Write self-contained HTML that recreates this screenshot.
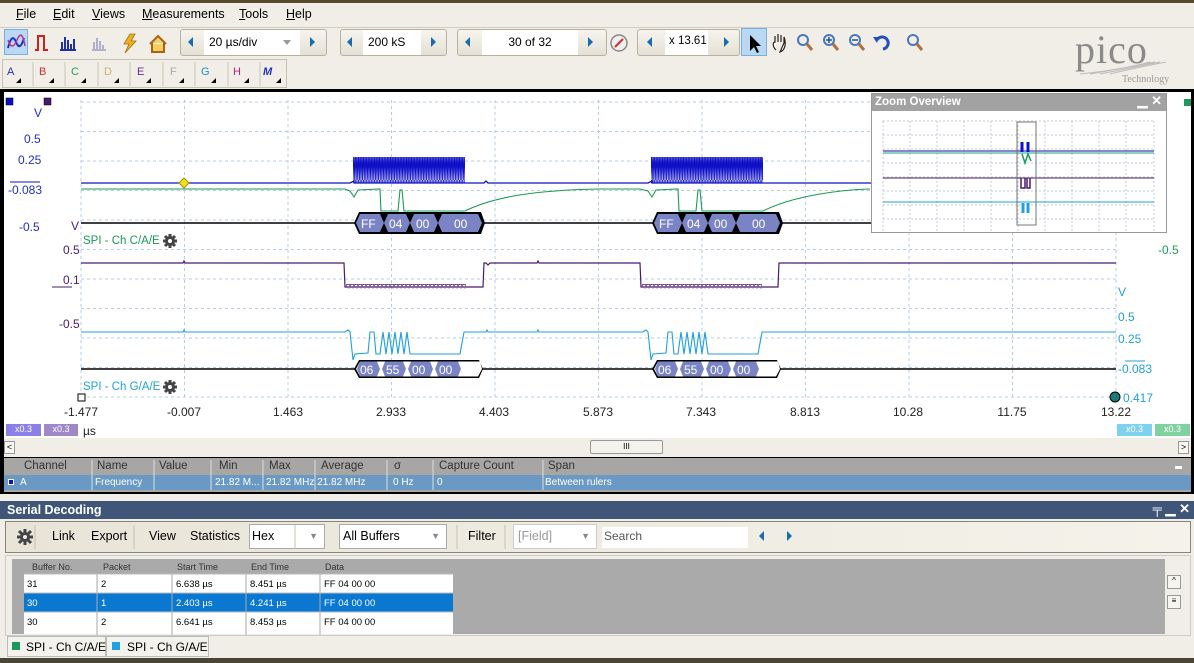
<!DOCTYPE html>
<html><head><meta charset="utf-8"><style>
*{margin:0;padding:0;box-sizing:border-box;white-space:nowrap}
body{width:1194px;height:663px;overflow:hidden;background:#f0eee6;font-family:"Liberation Sans",sans-serif;font-size:12px;color:#000;position:relative}
.abs{position:absolute}
.menu span{position:absolute;top:7px;font-size:12.5px}
.tb{position:absolute;border:1px solid #b8b0a0;border-radius:3px;background:linear-gradient(#f6f4ee,#e4e0d4)}
.fld{position:absolute;background:#fff;font-size:12px;padding-top:5px}
.arr{position:absolute;width:0;height:0;border-top:5px solid transparent;border-bottom:5px solid transparent}
.al{border-right:5px solid #1a6cb0}
.ar{border-left:5px solid #1a6cb0}
.ch{position:absolute;top:66px;font-size:11px}
.lbl{position:absolute;font-size:12px}
.xl{position:absolute;top:405px;font-size:12px;color:#222;transform:translateX(-50%)}
.mh{position:absolute;top:460px;font-size:11.5px;color:#333}
.mr{position:absolute;top:477px;font-size:10px;color:#fff}
.sdt{position:absolute;top:529px;font-size:12.5px}
.th{position:absolute;top:562px;font-size:9px;color:#333}
.td{position:absolute;font-size:9.5px}
</style></head><body>
<div class="abs" style="left:0;top:0;width:1194px;height:3px;background:#5a4a2c"></div>
<div class="menu"><span style="left:16px"><u>F</u>ile</span><span style="left:53px"><u>E</u>dit</span><span style="left:92px"><u>V</u>iews</span><span style="left:142px"><u>M</u>easurements</span><span style="left:239px"><u>T</u>ools</span><span style="left:286px"><u>H</u>elp</span></div>
<div class="abs" style="left:0;top:27px;width:1194px;height:1px;background:#d0ccc0"></div>
<div class="abs" style="left:4px;top:29px;width:24px;height:26px;background:#b8d8f4;border:1px solid #7ab0e0"></div>
<svg class="abs" style="left:0;top:28px" width="180" height="30">
<path d="M8 20 Q12 4 16 14 T24 10" stroke="#2030c0" stroke-width="2" fill="none"/><path d="M8 12 Q12 24 17 12 T25 18" stroke="#c03090" stroke-width="1.5" fill="none"/>
<path d="M35 22 H38 V8 H44 V22 H48" stroke="#d02020" stroke-width="2" fill="none"/>
<path d="M60 22 H76 M62 22V14 M65 22V9 M68 22V12 M71 22V16 M74 22V11" stroke="#2030a0" stroke-width="2"/>
<path d="M92 22 H106 M94 22V14 M97 22V10 M100 22V13 M103 22V17" stroke="#b0b0c8" stroke-width="2"/>
<path d="M130 6 L124 16 H129 L125 25 L136 13 H131 L135 6Z" fill="#f0b020" stroke="#a07010" stroke-width=".8"/>
<path d="M150 16 L158 8 L166 16 M152 15 V24 H164 V15" stroke="#b06010" stroke-width="2" fill="#f0d060"/>
</svg>
<div class="tb" style="left:180px;top:29px;width:147px;height:27px"></div>
<div class="arr al" style="left:188px;top:37px"></div><div class="fld" style="left:204px;top:30px;width:96px;height:25px;padding-left:5px">20 µs/div</div>
<div class="arr" style="left:283px;top:40px;border:4px solid transparent;border-top:5px solid #999"></div>
<div class="arr ar" style="left:310px;top:37px"></div>
<div class="tb" style="left:340px;top:29px;width:107px;height:27px"></div>
<div class="arr al" style="left:347px;top:37px"></div><div class="fld" style="left:363px;top:30px;width:58px;height:25px;padding-left:5px">200 kS</div><div class="arr ar" style="left:431px;top:37px"></div>
<div class="tb" style="left:457px;top:29px;width:150px;height:27px"></div>
<div class="arr al" style="left:465px;top:37px"></div><div class="fld" style="left:482px;top:30px;width:96px;height:25px;text-align:center">30 of 32</div><div class="arr ar" style="left:588px;top:37px"></div>
<svg class="abs" style="left:608px;top:32px" width="22" height="22"><circle cx="11" cy="11" r="8" fill="#eee" stroke="#888" stroke-width="1.5"/><path d="M7 15 L15 7" stroke="#d03030" stroke-width="2"/></svg>
<div class="tb" style="left:637px;top:29px;width:103px;height:27px"></div>
<div class="arr al" style="left:647px;top:37px"></div><div class="fld" style="left:665px;top:30px;width:43px;height:25px;padding-left:4px;font-size:11.5px">x 13.61</div><div class="arr ar" style="left:724px;top:37px"></div>
<div class="abs" style="left:741px;top:28px;width:26px;height:28px;background:#b8d8f4;border:1px solid #7ab0e0"></div>
<svg class="abs" style="left:740px;top:28px" width="190" height="30">
<path d="M10 7 V23 L14 19 L17 25 L19 24 L16 18 H21Z" fill="#000"/>
<path d="M36 22 C32 18 33 14 35 14 V8 M38 14 V6 M41 14 V7 M44 15 V9 C46 14 46 22 40 24Z" stroke="#222" fill="#fff" stroke-width="1.2"/>
<g fill="none" stroke-width="2"><circle cx="63" cy="12" r="5" stroke="#4a78b8"/><path d="M67 16 L72 22" stroke="#b07040" stroke-width="3"/>
<circle cx="89" cy="12" r="5" stroke="#4a78b8"/><path d="M93 16 L98 22" stroke="#b07040" stroke-width="3"/><path d="M86 12h6M89 9v6" stroke="#2050a0" stroke-width="1.5"/>
<circle cx="115" cy="12" r="5" stroke="#4a78b8"/><path d="M119 16 L124 22" stroke="#b07040" stroke-width="3"/><path d="M112 12h6" stroke="#2050a0" stroke-width="1.5"/>
<path d="M137 12 A6 6 0 1 1 143 21" stroke="#2050c0" stroke-width="3"/><path d="M133 9 L139 9 L137 15Z" fill="#2050c0" stroke="none"/>
<circle cx="173" cy="12" r="5" stroke="#4a78b8"/><path d="M177 16 L182 22" stroke="#b07040" stroke-width="3"/></g>
</svg>
<div class="abs" style="left:1075px;top:26px;font-family:'Liberation Serif',serif;font-size:40px;color:#8a8a8a;letter-spacing:1px">pico</div>
<div class="abs" style="left:1122px;top:74px;font-family:'Liberation Serif',serif;font-size:10px;color:#999">Technology</div>
<svg class="abs" style="left:1080px;top:60px" width="100" height="16"><path d="M0 14 Q40 10 70 2 M10 14 Q45 8 75 2 M20 14 Q50 8 80 2 M30 14 Q55 8 86 2" stroke="#bbb" fill="none"/></svg>
<div class="abs" style="left:2px;top:59px;width:285px;height:29px;border:1px solid #c8c0b0;background:#f0eee6"></div>
<div class="ch" style="left:7px;color:#2030c0">A</div><div class="ch" style="left:39px;color:#d03030">B</div><div class="ch" style="left:71px;color:#20a060">C</div><div class="ch" style="left:104px;color:#d0b070">D</div><div class="ch" style="left:137px;color:#6a2a9a">E</div><div class="ch" style="left:170px;color:#aaa">F</div><div class="ch" style="left:201px;color:#1a90d0">G</div><div class="ch" style="left:233px;color:#c02080">H</div><div class="ch" style="left:263px;color:#2030c0;font-style:italic;font-weight:bold">M</div>
<svg class="abs" style="left:0;top:59px" width="290" height="30"><g fill="#000"><path d="M16 24h5v-5z"/><path d="M49 24h5v-5z"/><path d="M81 24h5v-5z"/><path d="M114 24h5v-5z"/><path d="M146 24h5v-5z"/><path d="M179 24h5v-5z"/><path d="M211 24h5v-5z"/><path d="M244 24h5v-5z"/><path d="M276 24h5v-5z"/></g><g stroke="#ccc4b4"><path d="M33 3v24M65 3v24M98 3v24M130 3v24M163 3v24M195 3v24M228 3v24M260 3v24"/></g></svg>
<div class="abs" style="left:0;top:89px;width:1194px;height:405px;background:#000"></div>
<div class="abs" style="left:4px;top:92px;width:1187px;height:346px;background:#fff"></div>
<div class="abs" style="left:4px;top:438px;width:1187px;height:19px;background:#f0eee6"></div>
<div class="abs" style="left:4px;top:441px;width:11px;height:13px;border:1px solid #999;background:#f8f8f4;font-size:9px;text-align:center;line-height:11px">&lt;</div>
<div class="abs" style="left:1178px;top:441px;width:11px;height:13px;border:1px solid #999;background:#f8f8f4;font-size:9px;text-align:center;line-height:11px">&gt;</div>
<div class="abs" style="left:590px;top:440px;width:73px;height:14px;border:1px solid #999;border-radius:2px;background:#f4f2ec;font-size:8px;text-align:center;line-height:12px">III</div>
<svg class="abs" style="left:0;top:0" width="1194" height="440">
<defs>
<pattern id="zz" x="353" y="0" width="3.2" height="30" patternUnits="userSpaceOnUse"><path d="M0 30 L0.8 0 L1.6 30 L2.4 0 L3.2 30" stroke="#1010c8" stroke-width="0.9" fill="none"/></pattern>
<pattern id="pn" x="0" y="0" width="4" height="6" patternUnits="userSpaceOnUse"><path d="M0 3 L1 1 L2 4 L3 2 L4 3" stroke="#4a1a6a" fill="none" stroke-width="0.8"/></pattern>
</defs>
<g stroke="#b8cce0" stroke-dasharray="3,3" stroke-width="1">
<path d="M81 102H1116M81 131.5H1116M81 161H1116M81 190.5H1116M81 220H1116M81 249.5H1116M81 279H1116M81 308.5H1116M81 338H1116M81 367.5H1116M81 397H1116"/>
<path d="M81 100V397M184.5 100V397M288 100V397M391.5 100V397M495 100V397M598.5 100V397M702 100V397M805.5 100V397M909 100V397M1012.5 100V397M1116 100V397"/>
</g>
<path d="M81 183H350L354 181V183H465L470 183H484L486 181L488 183H648L652 181V183H763H1116" stroke="#1010c0" fill="none" stroke-width="1.3"/>
<rect x="353" y="157" width="112" height="26" fill="url(#zz)"/><rect x="651" y="157" width="112" height="26" fill="url(#zz)"/>
<path d="M81 189H345L350 191L354 197L358 190L380 189L381 211L398 211L400 190L402 190L404 211L465 211C495 196 540 190 600 189H640L648 191L652 197L656 190L678 189L679 211L696 211L698 190L700 190L702 211L763 211C793 196 838 190 870 189" stroke="#1a9a5a" fill="none" stroke-width="1.1"/>
<path d="M81 223H1116" stroke="#000" stroke-width="1.5"/>
<polygon points="359,212 481,212 485,223 481,234 359,234 354,223" fill="#000"/>
<polygon points="360,214 380,214 384,223 380,232 360,232 356,223" fill="#7a84c4"/>
<polygon points="388,214 406,214 410,223 406,232 388,232 384,223" fill="#7a84c4"/>
<polygon points="414,214 434,214 438,223 434,232 414,232 410,223" fill="#7a84c4"/>
<polygon points="442,214 478,214 482,223 478,232 442,232 438,223" fill="#7a84c4"/>
<polygon points="657,212 779,212 783,223 779,234 657,234 652,223" fill="#000"/>
<polygon points="658,214 678,214 682,223 678,232 658,232 654,223" fill="#7a84c4"/>
<polygon points="686,214 704,214 708,223 704,232 686,232 682,223" fill="#7a84c4"/>
<polygon points="712,214 732,214 736,223 732,232 712,232 708,223" fill="#7a84c4"/>
<polygon points="740,214 776,214 780,223 776,232 740,232 736,223" fill="#7a84c4"/>
<g fill="#fff" font-size="12" font-family="Liberation Sans"><text x="361" y="228">FF</text><text x="389" y="228">04</text><text x="416" y="228">00</text><text x="454" y="228">00</text><text x="659" y="228">FF</text><text x="687" y="228">04</text><text x="714" y="228">00</text><text x="752" y="228">00</text></g>
<path d="M81 263H183L184 261L185 263H344L345 287H483L484 263H486L488 265L490 263H537L538 261L539 263H640L641 287H778L779 263H1116" stroke="#4a1a6a" fill="none" stroke-width="1.2"/>
<rect x="346" y="284" width="120" height="5" fill="url(#pn)"/><rect x="642" y="284" width="120" height="5" fill="url(#pn)"/>
<path d="M52 287H72" stroke="#4a1a6a"/>
<path d="M81 332H183L184 330L185 332H345L348 330L350 332L353 360L355 354L368 353L370 332L374 332L376 354L380 354L383 332L386 354L389 332L392 354L395 332L398 354L401 332L404 354L407 332L410 354L460 354L464 332H486L487 330L488 332H537L538 330L539 332H643L646 330L648 332L651 360L653 354L666 353L668 332L672 332L674 354L678 354L681 332L684 354L687 332L690 354L693 332L696 354L699 332L702 354L705 332L708 354L758 354L762 332H1116" stroke="#20a0d8" fill="none" stroke-width="1.1"/>
<path d="M81 369H1116" stroke="#000" stroke-width="1.5"/>
<polygon points="359,360 479,360 483,369 479,378 359,378 354,369" fill="#000"/>
<polygon points="360,361.5 480,361.5 482,369 478,376.5 360,376.5 356,369" fill="#fff"/>
<polygon points="360,361.5 377,361.5 380,369 377,376.5 360,376.5 357,369" fill="#7a84c4"/>
<polygon points="385,361.5 403,361.5 406,369 403,376.5 385,376.5 382,369" fill="#7a84c4"/>
<polygon points="411,361.5 430,361.5 433,369 430,376.5 411,376.5 408,369" fill="#7a84c4"/>
<polygon points="438,361.5 458,361.5 461,369 458,376.5 438,376.5 435,369" fill="#7a84c4"/>
<polygon points="657,360 777,360 781,369 777,378 657,378 652,369" fill="#000"/>
<polygon points="658,361.5 778,361.5 780,369 776,376.5 658,376.5 654,369" fill="#fff"/>
<polygon points="658,361.5 675,361.5 678,369 675,376.5 658,376.5 655,369" fill="#7a84c4"/>
<polygon points="683,361.5 701,361.5 704,369 701,376.5 683,376.5 680,369" fill="#7a84c4"/>
<polygon points="709,361.5 728,361.5 731,369 728,376.5 709,376.5 706,369" fill="#7a84c4"/>
<polygon points="736,361.5 756,361.5 759,369 756,376.5 736,376.5 733,369" fill="#7a84c4"/>
<g fill="#fff" font-size="12" font-family="Liberation Sans"><text x="360" y="374">06</text><text x="386" y="374">55</text><text x="412" y="374">00</text><text x="439" y="374">00</text><text x="658" y="374">06</text><text x="684" y="374">55</text><text x="710" y="374">00</text><text x="737" y="374">00</text></g>
<polygon points="184,178 189,183 184,188 179,183" fill="#f0e020" stroke="#a09000"/>
<rect x="6" y="98" width="7" height="7" fill="#1010c0" stroke="#000" stroke-width=".5"/>
<rect x="44" y="98" width="7" height="7" fill="#4a1a6a" stroke="#000" stroke-width=".5"/>
<rect x="1184" y="99" width="7" height="7" fill="#1a9a5a"/>
<rect x="78" y="394" width="7" height="7" fill="#fff" stroke="#000"/>
<circle cx="1115" cy="397" r="5" fill="#1a7a7a" stroke="#000"/>
<path d="M10 182H40" stroke="#1010c0"/><path d="M1125 361H1145" stroke="#20a0d8"/>
<g fill="#444"><circle cx="170" cy="241" r="5"/><circle cx="170" cy="387" r="5"/></g>
<g stroke="#444" stroke-width="3"><path d="M170 234v14M163 241h14M165 236l10 10M175 236l-10 10"/><path d="M170 380v14M163 387h14M165 382l10 10M175 382l-10 10"/></g>
<circle cx="170" cy="241" r="2" fill="#fff"/><circle cx="170" cy="387" r="2" fill="#fff"/>
</svg>
<div class="lbl" style="left:34px;top:106px;color:#2030c0">V</div>
<div class="lbl" style="left:24px;top:132px;color:#2030c0">0.5</div>
<div class="lbl" style="left:18px;top:153px;color:#2030c0">0.25</div>
<div class="lbl" style="left:8px;top:183px;color:#2030c0">-0.083</div>
<div class="lbl" style="left:19px;top:220px;color:#2030c0">-0.5</div>
<div class="lbl" style="left:71px;top:219px;color:#4a1a6a">V</div>
<div class="lbl" style="left:63px;top:243px;color:#4a1a6a">0.5</div>
<div class="lbl" style="left:63px;top:273px;color:#4a1a6a">0.1</div>
<div class="lbl" style="left:59px;top:317px;color:#4a1a6a">-0.5</div>
<div class="lbl" style="left:83px;top:235px;color:#1a9a5a;font-size:11.5px">SPI - Ch C/A/E</div>
<div class="lbl" style="left:83px;top:381px;color:#20a0d8;font-size:11.5px">SPI - Ch G/A/E</div>
<div class="lbl" style="left:1140px;top:169px;color:#1a9a5a">5</div>
<div class="lbl" style="left:1140px;top:213px;color:#1a9a5a">.1</div>
<div class="lbl" style="left:1158px;top:243px;color:#1a9a5a">-0.5</div>
<div class="lbl" style="left:1118px;top:285px;color:#20a0d8">V</div>
<div class="lbl" style="left:1118px;top:310px;color:#20a0d8">0.5</div>
<div class="lbl" style="left:1118px;top:332px;color:#20a0d8">0.25</div>
<div class="lbl" style="left:1118px;top:362px;color:#20a0d8">-0.083</div>
<div class="lbl" style="left:1123px;top:391px;color:#20a0d8">0.417</div>
<div class="xl" style="left:81px">-1.477</div><div class="xl" style="left:184px">-0.007</div><div class="xl" style="left:288px">1.463</div><div class="xl" style="left:391px">2.933</div><div class="xl" style="left:494px">4.403</div><div class="xl" style="left:598px">5.873</div><div class="xl" style="left:701px">7.343</div><div class="xl" style="left:805px">8.813</div><div class="xl" style="left:908px">10.28</div><div class="xl" style="left:1012px">11.75</div><div class="xl" style="left:1116px">13.22</div>
<div class="abs" style="left:6px;top:424px;width:35px;height:12px;background:#8a80e8;color:#fff;font-size:9px;text-align:center">x0.3</div>
<div class="abs" style="left:44px;top:424px;width:34px;height:12px;background:#a088c8;color:#fff;font-size:9px;text-align:center">x0.3</div>
<div class="lbl" style="left:83px;top:424px;color:#222">µs</div>
<div class="abs" style="left:1117px;top:424px;width:35px;height:12px;background:#80d0f0;color:#fff;font-size:9px;text-align:center">x0.3</div>
<div class="abs" style="left:1155px;top:424px;width:35px;height:12px;background:#80d0a0;color:#fff;font-size:9px;text-align:center">x0.3</div>
<div class="abs" style="left:871px;top:93px;width:296px;height:140px;background:#fff;border:1px solid #999"></div>
<div class="abs" style="left:872px;top:94px;width:294px;height:17px;background:#a2a2a2;color:#fff;font-weight:bold;font-size:11.5px;padding:2px 0 0 3px">Zoom Overview<span style="position:absolute;right:4px;top:-1px;font-size:13px">▁ ✕</span></div>
<svg class="abs" style="left:871px;top:111px" width="296" height="122">
<g stroke="#c0ccd8" stroke-dasharray="2,2"><path d="M12 10H283M12 24H283M12 38H283M12 52H283M12 66H283M12 80H283M12 94H283M12 108H283M12 124H283"/><path d="M12 10V124M39 10V124M66 10V124M93 10V124M120 10V124M147 10V124M174 10V124M201 10V124M228 10V124M255 10V124M283 10V124"/></g>
<path d="M12 40H283" stroke="#1010a0"/><path d="M12 42H283" stroke="#20a080"/><path d="M12 67H283" stroke="#4a1a6a"/><path d="M12 91H283" stroke="#20a0d8"/>
<rect x="146" y="11" width="19" height="103" fill="none" stroke="#777"/>
<path d="M151 31V41M157 31V41" stroke="#1010d0" stroke-width="3"/><path d="M151 43L154 52L157 43L160 50" stroke="#1a9a5a" fill="none" stroke-width="1.5"/>
<path d="M150 67V77H154V67M156 67V77H159V67" stroke="#4a1a6a" fill="none" stroke-width="1.5"/>
<path d="M152 92V102M157 92V102" stroke="#20a0e0" stroke-width="3"/>
</svg>
<div class="abs" style="left:4px;top:458px;width:1187px;height:17px;background:#a8a6a4"></div>
<div class="abs" style="left:4px;top:475px;width:1187px;height:15px;background:#6a9ac4"></div>
<div class="abs" style="left:4px;top:490px;width:1187px;height:2px;background:#a8a6a4"></div>
<div class="mh" style="left:24px">Channel</div><div class="mh" style="left:97px">Name</div><div class="mh" style="left:159px">Value</div><div class="mh" style="left:219px">Min</div><div class="mh" style="left:269px">Max</div><div class="mh" style="left:321px">Average</div><div class="mh" style="left:394px">σ</div><div class="mh" style="left:439px">Capture Count</div><div class="mh" style="left:548px">Span</div>
<div class="abs" style="left:1175px;top:466px;width:7px;height:3px;background:#fff"></div>
<svg class="abs" style="left:0;top:458px" width="560" height="34"><path d="M92 2V32M154 2V32M211 2V32M263 2V32M315 2V32M387 2V32M433 2V32M543 2V32" stroke="#ddd"/></svg>
<div class="abs" style="left:8px;top:479px;width:6px;height:6px;background:#1010c0;border:1px solid #fff"></div>
<div class="mr" style="left:20px">A</div><div class="mr" style="left:95px">Frequency</div><div class="mr" style="left:215px">21.82 M...</div><div class="mr" style="left:266px">21.82 MHz 21.82 MHz</div><div class="mr" style="left:393px">0 Hz</div><div class="mr" style="left:437px">0</div><div class="mr" style="left:545px">Between rulers</div>
<div class="abs" style="left:0;top:494px;width:1194px;height:8px;background:#f0eee6"></div>
<div class="abs" style="left:0;top:501px;width:1194px;height:18px;background:#3f5678;color:#fff;font-weight:bold;font-size:12.5px;padding:2px 0 0 7px">Serial Decoding<span style="position:absolute;right:4px;top:0;font-size:13px">╤ ▁ ✕</span></div>
<div class="abs" style="left:5px;top:521px;width:1186px;height:32px;border:1px solid #8a8478;background:linear-gradient(90deg,#e8e4d8,#f4f2ea)"></div>
<svg class="abs" style="left:16px;top:528px" width="18" height="18"><g stroke="#444" stroke-width="3"><path d="M9 1v16M1 9h16M3 3l12 12M15 3l-12 12"/></g><circle cx="9" cy="9" r="5" fill="#444"/><circle cx="9" cy="9" r="2" fill="#eee"/></svg>
<div class="sdt" style="left:52px">Link</div><div class="sdt" style="left:91px">Export</div><div class="sdt" style="left:149px">View</div><div class="sdt" style="left:190px">Statistics</div>
<div class="abs" style="left:249px;top:524px;width:76px;height:25px;background:#fff;border:1px solid #aaa;padding:4px 0 0 2px;font-size:12.5px">Hex<span style="position:absolute;right:6px;top:6px;color:#888;font-size:9px">▼</span></div>
<div class="abs" style="left:339px;top:524px;width:108px;height:25px;background:#fff;border:1px solid #aaa;padding:4px 0 0 3px;font-size:12.5px">All Buffers<span style="position:absolute;right:6px;top:6px;color:#888;font-size:9px">▼</span></div>
<div class="sdt" style="left:468px">Filter</div>
<div class="abs" style="left:513px;top:524px;width:84px;height:25px;background:#fff;border:1px solid #ccc;padding:4px 0 0 4px;font-size:12.5px;color:#999">[Field]<span style="position:absolute;right:6px;top:6px;color:#888;font-size:9px">▼</span></div>
<div class="abs" style="left:602px;top:527px;width:146px;height:21px;background:#fff;padding:2px 0 0 2px;font-size:12px;color:#555">Search</div>
<div class="arr al" style="left:759px;top:531px"></div><div class="arr ar" style="left:787px;top:531px"></div>
<svg class="abs" style="left:0;top:521px" width="600" height="32"><path d="M35 4V28M134 4V28M295 4V28M457 4V28M505 4V28" stroke="#c8c0b0"/></svg>
<div class="abs" style="left:5px;top:555px;width:1186px;height:81px;background:#f0eee6;border:1px solid #ccc"></div>
<div class="abs" style="left:12px;top:559px;width:1155px;height:75px;background:#aaaaaa"></div>
<div class="abs" style="left:1165px;top:559px;width:19px;height:75px;background:#f0eee6"></div>
<div class="abs" style="left:1167px;top:575px;width:14px;height:14px;border:1px solid #999;font-size:8px;text-align:center;background:#f6f4ee">^</div>
<div class="abs" style="left:1167px;top:595px;width:14px;height:14px;border:1px solid #999;font-size:8px;text-align:center;background:#f6f4ee">≡</div>
<div class="abs" style="left:24px;top:574px;width:429px;height:19px;background:#fff"></div>
<div class="abs" style="left:24px;top:593px;width:429px;height:19px;background:#0a78d0"></div>
<div class="abs" style="left:24px;top:612px;width:429px;height:22px;background:#fff"></div>
<svg class="abs" style="left:0;top:559px" width="460" height="76"><path d="M97 0V76M172 0V76M246 0V76M320 0V76" stroke="#aaa"/><path d="M24 15H453M24 34H453M24 53H453" stroke="#bbb"/></svg>
<div class="th" style="left:32px">Buffer No.</div><div class="th" style="left:103px">Packet</div><div class="th" style="left:177px">Start Time</div><div class="th" style="left:251px">End Time</div><div class="th" style="left:325px">Data</div>
<div class="td" style="left:27px;top:579px">31</div><div class="td" style="left:101px;top:579px">2</div><div class="td" style="left:176px;top:579px">6.638 µs</div><div class="td" style="left:250px;top:579px">8.451 µs</div><div class="td" style="left:324px;top:579px">FF 04 00 00</div>
<div class="td" style="left:27px;top:598px;color:#fff">30</div><div class="td" style="left:101px;top:598px;color:#fff">1</div><div class="td" style="left:176px;top:598px;color:#fff">2.403 µs</div><div class="td" style="left:250px;top:598px;color:#fff">4.241 µs</div><div class="td" style="left:324px;top:598px;color:#fff">FF 04 00 00</div>
<div class="td" style="left:27px;top:617px">30</div><div class="td" style="left:101px;top:617px">2</div><div class="td" style="left:176px;top:617px">6.641 µs</div><div class="td" style="left:250px;top:617px">8.453 µs</div><div class="td" style="left:324px;top:617px">FF 04 00 00</div>
<div class="abs" style="left:7px;top:636px;width:99px;height:21px;background:#f4f2ec;border:1px solid #bbb;font-size:12px;padding:3px 0 0 18px">SPI - Ch C/A/E</div>
<div class="abs" style="left:12px;top:642px;width:8px;height:8px;background:#1a9a5a"></div>
<div class="abs" style="left:106px;top:636px;width:103px;height:21px;background:#f4f2ec;border:1px solid #bbb;font-size:12px;padding:3px 0 0 20px">SPI - Ch G/A/E</div>
<div class="abs" style="left:112px;top:642px;width:8px;height:8px;background:#20a0e0"></div>
<div class="abs" style="left:0;top:658px;width:1194px;height:5px;background:#4a4434"></div>
</body></html>
